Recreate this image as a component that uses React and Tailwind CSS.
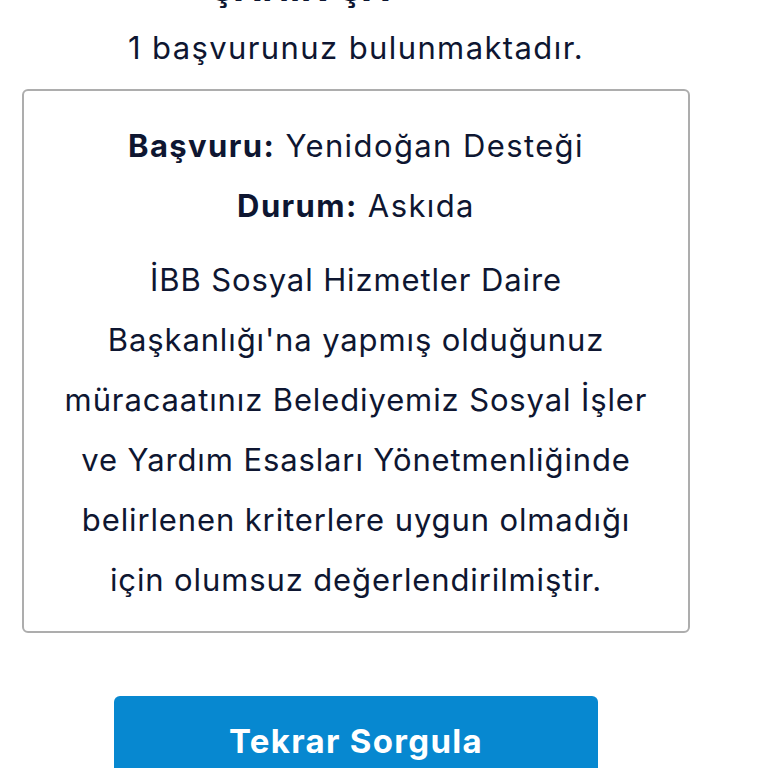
export default function App() {
  const lines = [
    'İBB Sosyal Hizmetler Daire',
    "Başkanlığı'na yapmış olduğunuz",
    'müracaatınız Belediyemiz Sosyal İşler',
    've Yardım Esasları Yönetmenliğinde',
    'belirlenen kriterlere uygun olmadığı',
    'için olumsuz değerlendirilmiştir.',
  ]

  return (
    <main className="h-[768px] overflow-hidden bg-white">
      <div className="w-[712px] px-[22px] font-['Inter',sans-serif] tracking-[0.055em] text-[#0e1631]">
        <h1 className="-mt-[30px] text-center text-[36px] font-bold leading-[36px]">ŞAHİN ŞA** ***</h1>
        <p className="mt-[22px] text-center text-[31px] leading-[40px] tracking-[0.045em]">1 başvurunuz bulunmaktadır.</p>

        <section className="mt-[21px] rounded-md border-2 border-[#adadad] px-2 pb-[21px] pt-[25px] text-center text-[31px]">
          <p className="leading-[60px] tracking-[0.045em]">
            <span className="font-bold">Başvuru:</span> Yenidoğan Desteği
          </p>
          <p className="leading-[59px] tracking-[0.045em]">
            <span className="font-bold">Durum:</span> Askıda
          </p>
          <div className="mt-[15px] leading-[60px]">
            {lines.map((line) => (
              <p key={line} className="whitespace-nowrap">{line}</p>
            ))}
          </div>
        </section>

        <div className="mt-[63px] flex justify-center">
          <button
            type="button"
            className="h-[92px] w-[484px] rounded-md bg-[#0788d0] text-[33px] font-bold tracking-[0.04em] text-white"
          >
            Tekrar Sorgula
          </button>
        </div>
      </div>
    </main>
  )
}
